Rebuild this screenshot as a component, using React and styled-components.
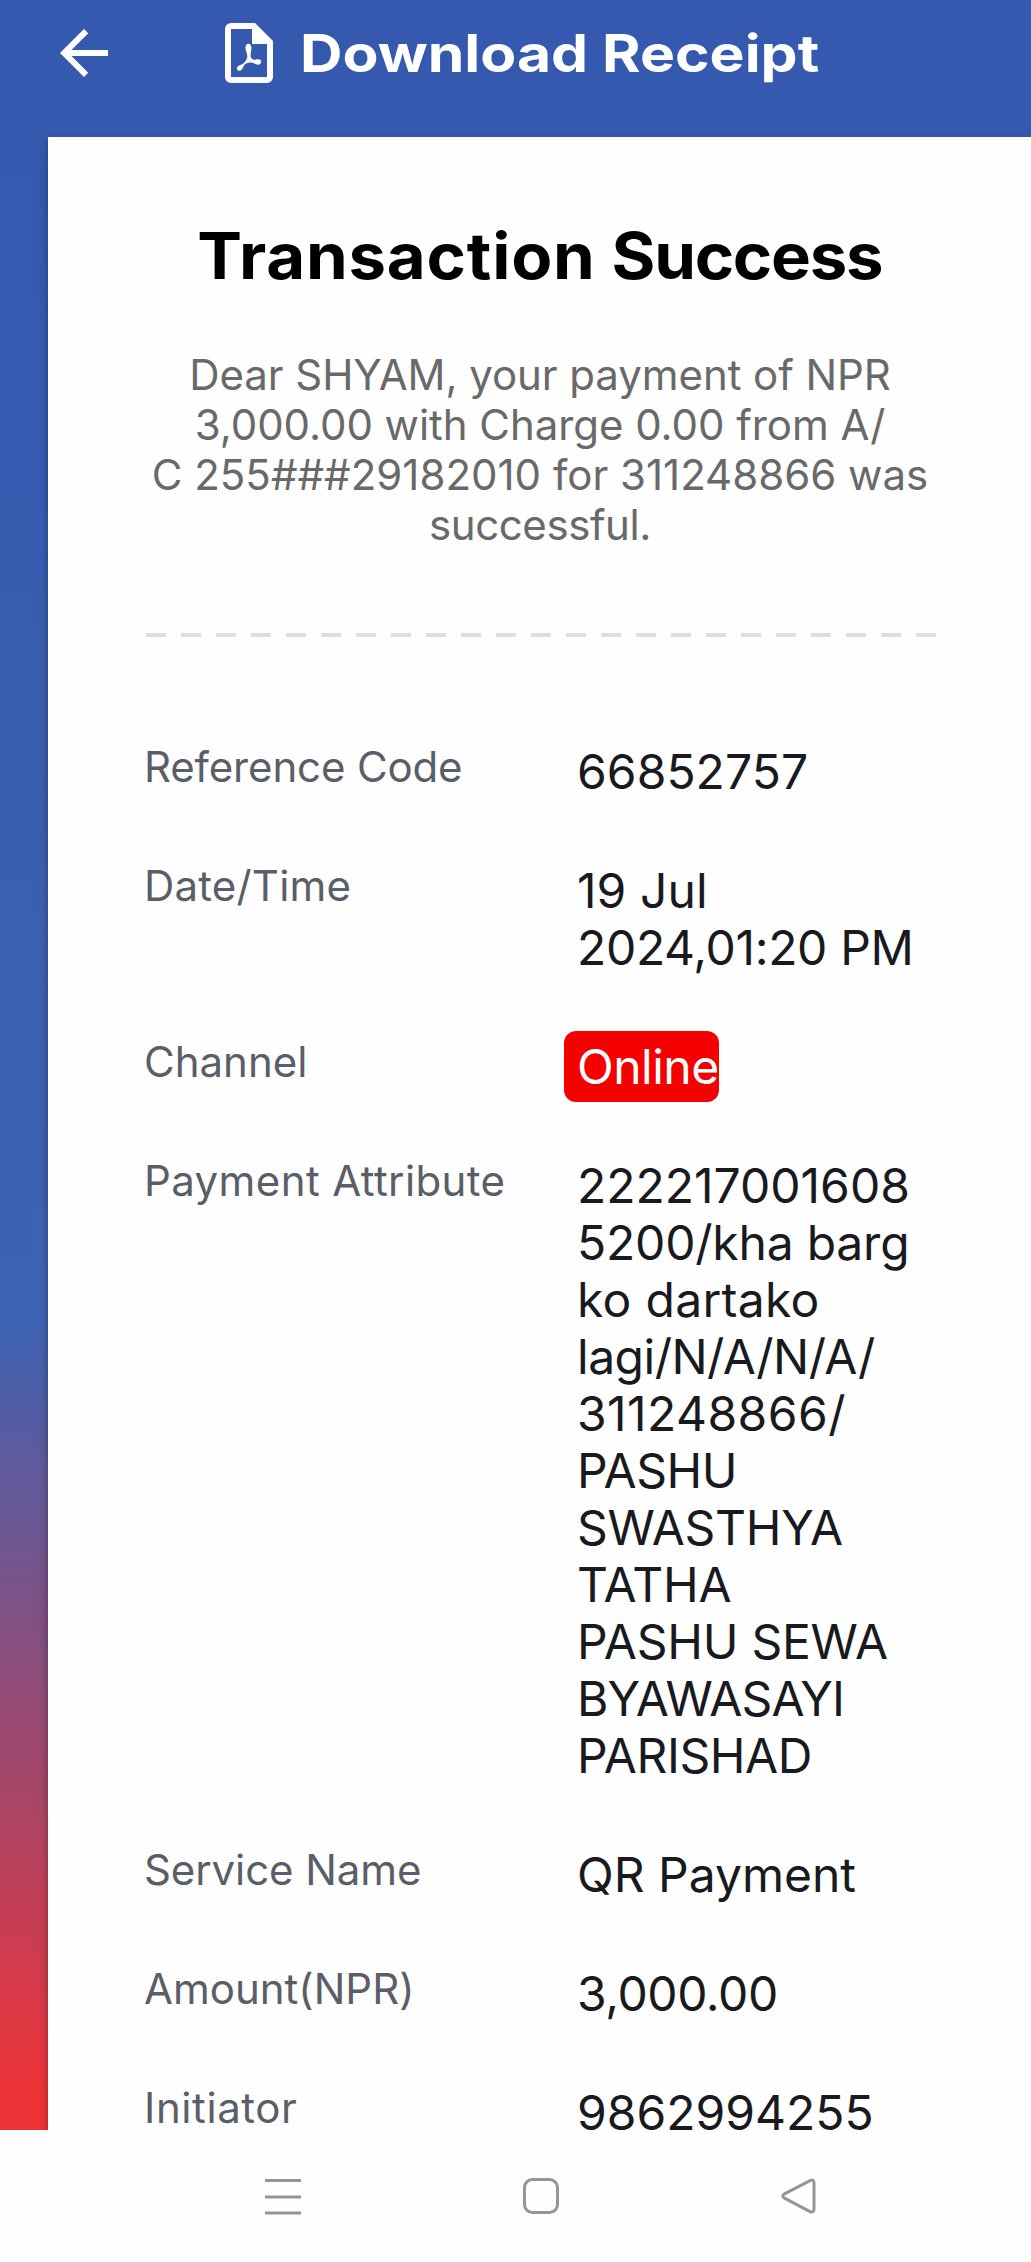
import React from "react";
import styled, { createGlobalStyle } from "styled-components";

const GlobalStyle = createGlobalStyle`
  * { box-sizing: border-box; }
  html, body { margin: 0; padding: 0; background: #fff; }
  body { font-family: Inter, "Liberation Sans", sans-serif; overflow: hidden; }
`;

const Screen = styled.div`
  display: flex;
  flex-direction: column;
  width: 1031px;
  height: 2262px;
  background: #fefefe;
`;

const Body = styled.div`
  display: flex;
  flex-direction: column;
  height: 2130px;
  overflow: hidden;
  background: linear-gradient(180deg, #3459af 0, #3459af 137px, #3d63b4 1320px, #ee3337 2095px, #ee3337 2130px);
`;

const Header = styled.header`
  display: flex;
  align-items: flex-start;
  flex: none;
  height: 137px;
  padding: 17px 0 0 48px;
  color: #fff;
`;

const Icon = styled.svg`
  flex: none;
  width: 72px;
  height: 72px;
  fill: currentColor;
`;

const HeaderTitle = styled.h1`
  display: flex;
  align-items: flex-start;
  margin: 0 0 0 93px;
  font-size: 52px;
  line-height: 74px;
  font-weight: 700;
`;

const WideText = styled.span`
  display: block;
  white-space: nowrap;
  transform: scaleX(${(p) => p.$stretch});
  transform-origin: ${(p) => p.$origin};
`;

const HeaderLabel = styled.div`
  margin-left: 15px;
`;

const Card = styled.main`
  flex: 1;
  min-height: 0;
  margin-left: 48px;
  padding: 79px 95px 0 96px;
  background: #fefefe;
  box-shadow: 0 4px 8px rgba(0, 0, 0, 0.34);
`;

const Title = styled.h2`
  display: flex;
  justify-content: center;
  margin: 0;
  color: #000;
  font-size: 64px;
  line-height: 80px;
  font-weight: 700;
`;

const Word = styled.span`
  letter-spacing: ${(p) => p.$tracking}px;
`;

const Message = styled.p`
  margin: 54px -10px 0;
  color: #696969;
  font-size: 42px;
  line-height: 50px;
  text-align: center;
`;

const TextLine = styled.span`
  display: block;
  white-space: nowrap;
  letter-spacing: ${(p) => p.$tracking}px;
`;

const Divider = styled.div`
  height: 4px;
  margin: 83px 0 104px 2px;
  background: repeating-linear-gradient(90deg, #dddee1 0 20px, transparent 20px 35px);
`;

const Details = styled.dl`
  display: flex;
  flex-direction: column;
  gap: 60px;
  margin: 0;
`;

const Row = styled.div`
  display: grid;
  grid-template-columns: 433px 1fr;
  align-items: start;
`;

const Label = styled.dt`
  padding-top: 1px;
  color: #5a5e68;
  font-size: 42px;
  line-height: 50px;
`;

const Value = styled.dd`
  margin: 0;
  padding-top: 2px;
  color: #181a20;
  font-size: 48px;
  line-height: 57px;
`;

const Badge = styled.div`
  width: 155px;
  height: 71px;
  margin: -7px 0 -7px -13px;
  padding: 7px 0 0 13px;
  border-radius: 12px;
  background: #f70000;
  color: #fff;
`;

const NavBar = styled.nav`
  display: grid;
  grid-template-columns: 258px 258px 258px;
  justify-content: center;
  align-items: start;
  justify-items: center;
  padding: 47px 0 0 51px;
  flex: 1;
`;

const NavIcon = styled.svg`
  width: 38px;
  height: 38px;
  fill: none;
  stroke: #959595;
  stroke-width: 3;
  stroke-linejoin: round;
`;

const message = [
  ["Dear SHYAM, your payment of NPR", -0.07],
  ["3,000.00 with Charge 0.00 from A/", -0.05],
  ["C 255###29182010 for 311248866 was", 0],
  ["successful.", -0.4],
];

const details = [
  { label: ["Reference Code", -0.15], value: [["66852757", 0.05]] },
  { label: ["Date/Time", 0.2], value: [["19 Jul", 0.1], ["2024,01:20 PM", -0.32]] },
  { label: ["Channel", 0], value: [["Online", -0.5]], badge: true },
  {
    label: ["Payment Attribute", 0.4],
    value: [
      ["222217001608", 0],
      ["5200/kha barg", -0.2],
      ["ko dartako", 0.3],
      ["lagi/N/A/N/A/", -0.5],
      ["311248866/", 0.45],
      ["PASHU", -0.5],
      ["SWASTHYA", -0.3],
      ["TATHA", -0.3],
      ["PASHU SEWA", -0.25],
      ["BYAWASAYI", -0.8],
      ["PARISHAD", -0.4],
    ],
  },
  { label: ["Service Name", -0.1], value: [["QR Payment", 0]] },
  { label: ["Amount(NPR)", 0], value: [["3,000.00", -0.4]] },
  { label: ["Initiator", 0.6], value: [["9862994255", 0]] },
];

function Lines({ lines }) {
  return lines.map(([text, tracking]) => (
    <TextLine key={text} $tracking={tracking}>
      {text}
    </TextLine>
  ));
}

export default function App() {
  return (
    <>
      <GlobalStyle />
      <Screen>
        <Body>
          <Header>
            <Icon viewBox="0 0 24 24">
              <path d="M20 11H7.83l5.59-5.59L12 4l-8 8 8 8 1.41-1.41L7.83 13H20z" />
            </Icon>
            <HeaderTitle>
              <Icon viewBox="0 0 24 24">
                <path d="M14 2L20 8V20A2 2 0 0 1 18 22H6A2 2 0 0 1 4 20V4A2 2 0 0 1 6 2H14M18 20V9H13V4H6V20H18" />
                <path d="M11.8 8.9C12.7 8.9 13 10 12.7 11.3C12.5 12.5 12.4 12.9 12.7 13.5C13 14.1 13.5 14.4 14.3 14.2C15.6 13.9 16.2 14.3 16 15.1C15.8 16.1 14.9 16.1 14 15.6C13 15 12 15.1 11.2 15.4C10.5 15.7 10.3 16.2 9.9 17C9.4 18 8.6 18.2 8.1 17.6C7.6 16.9 8.3 16.2 9.3 15.9C10.2 15.6 10.9 14.8 11.3 13.8C11.6 12.9 11.3 12.3 11 11.2C10.6 9.9 10.9 8.9 11.8 8.9Z" />
              </Icon>
              <HeaderLabel>
                <WideText $stretch={1.131} $origin="left">
                  Download Receipt
                </WideText>
              </HeaderLabel>
            </HeaderTitle>
          </Header>
          <Card>
            <Title>
              <WideText $stretch={1.048} $origin="center">
                <Word $tracking={0.75}>Transaction</Word> <Word $tracking={-1.2}>Success</Word>
              </WideText>
            </Title>
            <Message>
              <Lines lines={message} />
            </Message>
            <Divider />
            <Details>
              {details.map(({ label, value, badge }) => (
                <Row key={label[0]}>
                  <Label>
                    <Lines lines={[label]} />
                  </Label>
                  <Value>
                    {badge ? (
                      <Badge>
                        <Lines lines={value} />
                      </Badge>
                    ) : (
                      <Lines lines={value} />
                    )}
                  </Value>
                </Row>
              ))}
            </Details>
          </Card>
        </Body>
        <NavBar>
          <NavIcon viewBox="0 0 38 38">
            <path d="M1 3.5H37M1 20H37M1 36H37" />
          </NavIcon>
          <NavIcon viewBox="0 0 38 38">
            <rect x="2.5" y="2.5" width="33" height="33" rx="8" />
          </NavIcon>
          <NavIcon viewBox="0 0 38 38">
            <path d="M30.5 3.4 4.5 16.8Q1 19 4.5 21.2L30.5 34.8Q34 36 34 32V6Q34 2 30.5 3.4Z" />
          </NavIcon>
        </NavBar>
      </Screen>
    </>
  );
}
